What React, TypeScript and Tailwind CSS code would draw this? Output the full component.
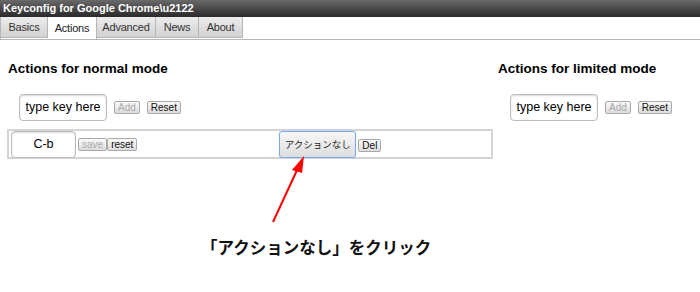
import React from "react";

const sans = "font-['Liberation_Sans',Arial,sans-serif]";

function Tab({ label, width, active }: { label: string; width: string; active?: boolean }) {
  return (
    <div
      className={`flex h-[21px] ${width} items-center justify-center border-r border-[#b5b5b5] text-[11px] tracking-[-0.2px] ${
        active
          ? "h-[22px] bg-white text-[#222]"
          : "border-b bg-gradient-to-b from-[#ececec] to-[#d2d2d2] text-[#333]"
      }`}
    >
      {label}
    </div>
  );
}

function SmallButton({ label, disabled }: { label: string; disabled?: boolean }) {
  return (
    <button
      className={`h-[13px] rounded-[2px] border border-[#a9a9a9] bg-gradient-to-b from-[#fafafa] to-[#dcdcdc] px-[3px] text-[10px] leading-[11px] ${
        disabled ? "text-[#aaa]" : "text-[#111]"
      }`}
    >
      {label}
    </button>
  );
}

function KeyInput({ value, width }: { value: string; width: string }) {
  return (
    <div
      className={`flex h-[27px] ${width} items-center justify-center rounded-[4px] border border-[#bdbdbd] bg-white text-[12.5px] text-black shadow-[inset_0_1px_2px_rgba(0,0,0,0.15)]`}
    >
      {value}
    </div>
  );
}

function AddRow() {
  return (
    <div className="flex items-center">
      <KeyInput value="type key here" width="w-[88px]" />
      <div className="ml-[7px] flex gap-[7px]">
        <SmallButton label="Add" disabled />
        <SmallButton label="Reset" />
      </div>
    </div>
  );
}

export default function App() {
  return (
    <div className={`relative h-[292px] w-[700px] overflow-hidden bg-white ${sans}`}>
      <div className="flex h-[17px] items-center bg-gradient-to-b from-[#6a6a6a] to-[#2a2a2a] pl-[3px] text-[11px] font-bold text-white">
        Keyconfig for Google Chrome\u2122
      </div>
      <div className="flex border-b border-[#b5b5b5]">
        <div className="flex border-l border-[#b5b5b5]">
          <Tab label="Basics" width="w-[47px]" />
          <Tab label="Actions" width="w-[49px]" active />
          <Tab label="Advanced" width="w-[59px]" />
          <Tab label="News" width="w-[43px]" />
          <Tab label="About" width="w-[44px]" />
        </div>
        <div className="flex-1" />
      </div>

      <div className="flex pt-[20px]">
        <div className="w-[490px] pl-[8px]">
          <h2 className="text-[13.5px] font-bold leading-[17px] text-black">Actions for normal mode</h2>
          <div className="mt-[17px] pl-[11px]">
            <AddRow />
          </div>
          <div className="-ml-[1px] mt-[8px] flex h-[30px] w-[486px] items-center border-2 border-[#d4d4d4] pl-[2px]">
            <KeyInput value="C-b" width="w-[65px]" />
            <div className="ml-[2px] flex">
              <SmallButton label="save" disabled />
              <SmallButton label="reset" />
            </div>
            <button className="ml-[142px] flex h-[27px] w-[77px] items-center justify-center whitespace-nowrap rounded-[3px] border border-[#7fa9e6] bg-gradient-to-b from-[#f7f7f7] to-[#dedede] font-['Noto_Sans_CJK_JP',sans-serif] text-[9.5px] text-[#222] shadow-[0_0_1px_#9ec1f0]">
              アクションなし
            </button>
            <div className="ml-[2px]">
              <SmallButton label="Del" />
            </div>
          </div>
        </div>
        <div className="pl-[8px]">
          <h2 className="text-[13.5px] font-bold leading-[17px] text-black">Actions for limited mode</h2>
          <div className="mt-[17px] pl-[12px]">
            <AddRow />
          </div>
        </div>
      </div>

      <svg className="absolute left-0 top-0" width="700" height="292" viewBox="0 0 700 292">
        <line x1="273" y1="222" x2="298" y2="168" stroke="#ff0000" strokeWidth="2" />
        <polygon points="304,156 292,170 302,173" fill="#ff0000" />
      </svg>

      <div className="absolute left-[201px] top-[235px] font-['Noto_Sans_CJK_JP',serif] text-[16.5px] font-bold text-[#111]">
        「アクションなし」をクリック
      </div>
    </div>
  );
}
